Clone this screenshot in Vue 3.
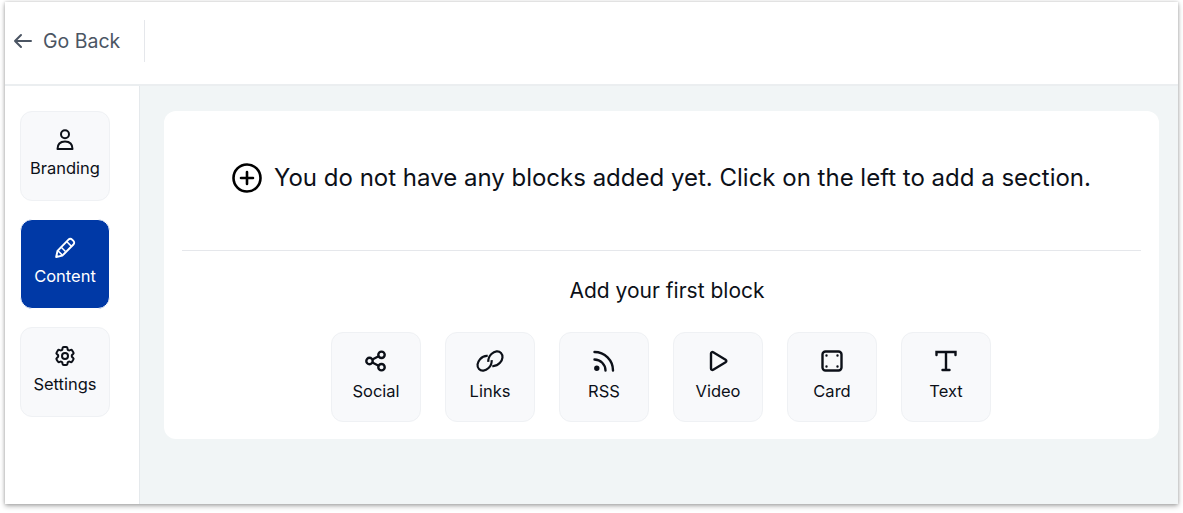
<script setup>
const side = [
  { label: 'Branding', icon: 'user' },
  { label: 'Content', icon: 'pen', active: true },
  { label: 'Settings', icon: 'gear' },
]
const blocks = [
  { label: 'Social', icon: 'share' },
  { label: 'Links', icon: 'link' },
  { label: 'RSS', icon: 'rss' },
  { label: 'Video', icon: 'play' },
  { label: 'Card', icon: 'card' },
  { label: 'Text', icon: 'text' },
]
const paths = {
  user: '<circle cx="12" cy="6.300" r="4"/><path d="M4.500 21c0-5 3-7.600 7.500-7.600s7.500 2.600 7.500 7.600z" stroke-linejoin="round"/>',
  pen: '<path d="M15.500 3.600c1-1 2.600-1 3.600 0l1.300 1.300c1 1 1 2.600 0 3.600L9.300 19.600 3.200 21l1.300-6.100z" stroke-linejoin="round"/><path d="M13.600 5.500l4.900 4.900M5 14.800l4.300 4.300M8.500 11.500l4 4" stroke-width="1.500"/>',
  gear: '<path stroke-linejoin="round" d="M9.594 3.940c.09-.542.56-.94 1.110-.94h2.593c.55 0 1.020.398 1.110.94l.213 1.281c.063.374.313.686.645.87.074.04.147.083.22.127.325.196.72.257 1.075.124l1.217-.456a1.125 1.125 0 011.370.49l1.296 2.247a1.125 1.125 0 01-.26 1.431l-1.003.827c-.293.24-.438.613-.431.992a6.759 6.759 0 010 .255c-.007.378.138.75.43.99l1.005.828c.424.35.534.954.26 1.430l-1.298 2.247a1.125 1.125 0 01-1.369.491l-1.217-.456c-.355-.133-.75-.072-1.076.124a6.570 6.570 0 01-.22.128c-.331.183-.581.495-.644.869l-.213 1.280c-.09.543-.56.941-1.110.941h-2.594c-.55 0-1.020-.398-1.110-.94l-.213-1.281c-.062-.374-.312-.686-.644-.87a6.520 6.520 0 01-.22-.127c-.325-.196-.72-.257-1.076-.124l-1.217.456a1.125 1.125 0 01-1.369-.49l-1.297-2.247a1.125 1.125 0 01.26-1.431l1.004-.827c.292-.24.437-.613.43-.992a6.932 6.932 0 010-.255c.007-.378-.138-.75-.43-.99l-1.004-.828a1.125 1.125 0 01-.26-1.430l1.297-2.247a1.125 1.125 0 011.370-.491l1.216.456c.356.133.751.072 1.076-.124.072-.044.146-.087.22-.128.332-.183.582-.495.644-.869l.214-1.281z"/><circle cx="12" cy="12" r="3"/>',
  share: '<circle cx="5.500" cy="12" r="3.200"/><circle cx="17.500" cy="5.800" r="3.200"/><circle cx="17.500" cy="18.200" r="3.200"/><path d="M8.400 10.500l6.200-3.200M8.400 13.500l6.200 3.200"/>',
  link: '<g transform="translate(12 12) scale(1.280 1.320) translate(-12 -12)" stroke-width="1.700"><path d="M10.200 8.200c-2.300-.2-4.400.7-6 2.400-2.300 2.500-2.600 5.700-.8 7.500s5 1.500 7.500-.8c1.700-1.600 2.600-3.700 2.400-6"/><path d="M13.800 15.800c2.300.2 4.400-.7 6-2.400 2.300-2.500 2.600-5.700.8-7.500s-5-1.500-7.500.8c-1.700 1.600-2.600 3.700-2.400 6"/></g>',
  rss: '<path d="M2.500 10.500c6 0 11 5 11 11M2.500 3c10.200 0 18.500 8.300 18.500 18.500" stroke-linecap="round"/><circle cx="4.800" cy="19.200" r="1.500" fill="currentColor"/>',
  play: '<path d="M5 4.600c0-1.200 1.200-1.900 2.200-1.300l12.400 7.400c1 .6 1 2 0 2.600L7.200 20.700c-1 .6-2.200-.1-2.200-1.300z" stroke-linejoin="round"/>',
  card: '<rect x="2.500" y="2.500" width="19" height="19" rx="3"/><path d="M6.500 6.500h.01M17.500 6.500h.01M6.500 17.500h.01M17.500 17.500h.01" stroke-linecap="round"/>',
  text: '<path d="M2.500 6V3h19v3M12 3v18M8.500 21h7" stroke-linecap="round"/>',
}
</script>

<template>
  <div class="page">
    <div class="frame">
      <header class="topbar">
        <button class="back">
          <svg class="back-icon" viewBox="0 0 20 20" fill="none" stroke="currentColor" stroke-width="2" stroke-linecap="round" stroke-linejoin="round">
            <path d="M18 10H2M8 4l-6 6 6 6" />
          </svg>
          <span>Go Back</span>
        </button>
        <span class="divider"></span>
      </header>
      <div class="body">
        <aside class="sidebar">
          <div v-for="s in side" :key="s.label" class="tile side-tile" :class="{ active: s.active }">
            <svg class="tile-icon" viewBox="0 0 24 24" fill="none" stroke="currentColor" stroke-width="2" v-html="paths[s.icon]"></svg>
            <span>{{ s.label }}</span>
          </div>
        </aside>
        <main class="main">
          <section class="card">
            <div class="notice">
              <svg class="plus" viewBox="0 0 30 30" fill="none" stroke="currentColor" stroke-width="2.600" stroke-linecap="round">
                <circle cx="15" cy="15" r="13.500" />
                <path d="M15 9v12M9 15h12" />
              </svg>
              <span>You do not have any blocks added yet. Click on the left to add a section.</span>
            </div>
            <div class="first">
              <h2>Add your first block</h2>
              <div class="blocks">
                <div v-for="b in blocks" :key="b.label" class="tile">
                  <svg class="tile-icon" viewBox="0 0 24 24" fill="none" stroke="currentColor" stroke-width="2.400" v-html="paths[b.icon]"></svg>
                  <span>{{ b.label }}</span>
                </div>
              </div>
            </div>
          </section>
        </main>
      </div>
    </div>
  </div>
</template>

<style>
html, body { margin: 0; background: #fff; }
</style>

<style scoped>
.page {
  box-sizing: border-box;
  height: 513px;
  padding: 2px 5px 0;
  overflow: hidden;
}
.frame {
  box-sizing: border-box;
  height: 502px;
  display: flex;
  flex-direction: column;
  background: #fff;
  box-shadow: 0 2px 5px 0 rgba(0, 0, 0, 0.32), 0 0 3px 0 rgba(0, 0, 0, 0.16);
  font-family: Inter, "Liberation Sans", sans-serif;
  color: #0c1018;
}
.topbar {
  box-sizing: border-box;
  height: 84px;
  flex: none;
  display: flex;
  align-items: center;
  border-bottom: 2px solid #ebeef0;
  padding-bottom: 4px;
}
.back {
  display: flex;
  align-items: center;
  gap: 10px;
  width: 139px;
  padding: 0 0 0 8px;
  background: none;
  border: 0;
  font: inherit;
  font-size: 19.500px;
  color: #4b5563;
  box-sizing: border-box;
}
.back-icon { width: 20px; height: 20px; flex: none; }
.divider { width: 1px; height: 42px; background: #e5e7eb; }
.body { flex: 1; display: flex; min-height: 0; }
.sidebar {
  box-sizing: border-box;
  width: 135px;
  flex: none;
  border-right: 1px solid #e5e9ec;
  display: flex;
  flex-direction: column;
  gap: 18px;
  padding: 25px 0 0 15px;
}
.tile {
  box-sizing: border-box;
  width: 90px;
  height: 90px;
  display: flex;
  flex-direction: column;
  align-items: center;
  gap: 6px;
  padding-top: 16px;
  border: 1px solid #eff1f4;
  border-radius: 12px;
  background: #f8f9fb;
  font-size: 16.500px;
  line-height: 24px;
  color: #0c1018;
}
.side-tile { gap: 4px; }
.tile.active { background: #0039a6; border-color: #fff; color: #fff; }
.tile-icon { width: 24px; height: 24px; flex: none; overflow: visible; }
.main {
  flex: 1;
  min-width: 0;
  background: #f1f5f6;
  padding: 25px 19px 0 24px;
}
.card {
  box-sizing: border-box;
  height: 328px;
  background: #fff;
  border-radius: 12px;
  padding: 0 18px;
}
.notice {
  box-sizing: border-box;
  height: 140px;
  border-bottom: 1px solid #e5e7eb;
  display: flex;
  align-items: center;
  justify-content: center;
  gap: 12px;
  font-size: 24px;
  padding-bottom: 6px;
  color: #0c1018;
}
.plus { width: 30px; height: 30px; flex: none; color: #000; }
.first { display: flex; flex-direction: column; align-items: center; }
.first h2 {
  margin: 26px 0 0;
  padding-left: 11px;
  font-size: 21px;
  line-height: 28px;
  font-weight: 400;
}
.blocks { display: flex; gap: 24px; margin: 27px 1px 0 0; }
</style>
